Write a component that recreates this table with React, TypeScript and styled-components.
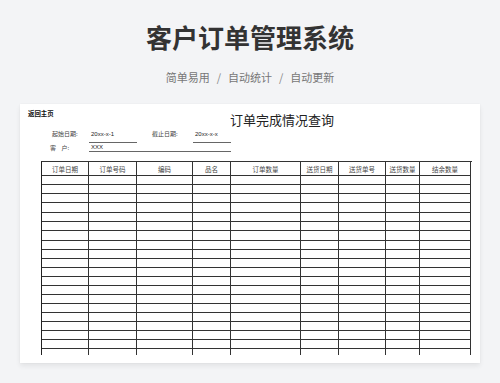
import React from "react";
import styled, { createGlobalStyle } from "styled-components";

const GlobalStyle = createGlobalStyle`
  html, body { margin: 0; padding: 0; }
  body {
    background: #f3f4f6;
    font-family: "Noto Sans CJK SC", "Noto Sans", sans-serif;
    width: 500px;
    height: 383px;
    overflow: hidden;
  }
`;

const Page = styled.div`
  display: flex;
  flex-direction: column;
  align-items: center;
  padding-top: 20px;
`;

const Title = styled.h1`
  margin: 0;
  font-size: 26px;
  line-height: 34px;
  font-weight: 700;
  color: #333;
`;

const Subtitle = styled.div`
  margin-top: 15px;
  height: 16px;
  font-size: 11px;
  line-height: 16px;
  color: #777;
  display: flex;
  align-items: center;
`;

const Sep = styled.span`
  margin: 0 7px;
  color: #888;
`;

const Card = styled.div`
  margin-top: 19px;
  align-self: stretch;
  margin-left: 20px;
  margin-right: 20px;
  height: 259px;
  box-sizing: border-box;
  background: #fff;
  box-shadow: 0 3px 5px rgba(0, 0, 0, 0.07), 0 0 2px rgba(0, 0, 0, 0.04);
  padding: 6px 9px 0 8px;
  display: flex;
  flex-direction: column;
  overflow: hidden;
`;

const HeadRow = styled.div`
  display: flex;
  align-items: flex-start;
  height: 18px;
`;

const BackLink = styled.span`
  font-size: 6.4px;
  line-height: 8px;
  font-weight: 700;
  color: #111;
  width: 26px;
  white-space: nowrap;
`;

const SheetTitle = styled.div`
  margin-left: 176px;
  margin-top: 1px;
  font-size: 13px;
  line-height: 18px;
  color: #222;
`;

const FormRow = styled.div<{ $h: number; $pl: number }>`
  display: flex;
  align-items: flex-start;
  height: ${(p) => p.$h}px;
  padding-left: ${(p) => p.$pl}px;
`;

const Label = styled.span<{ $w: number; $ml?: number; $top: number }>`
  width: ${(p) => p.$w}px;
  margin-left: ${(p) => p.$ml ?? 0}px;
  margin-top: ${(p) => p.$top}px;
  font-size: 6px;
  line-height: 8px;
  color: #444;
  white-space: pre;
`;

const Value = styled.span<{ $w: number; $h: number; $top: number }>`
  width: ${(p) => p.$w}px;
  height: ${(p) => p.$h}px;
  box-sizing: border-box;
  border-bottom: 1px solid #666;
  padding-left: 2px;
  padding-top: ${(p) => p.$top}px;
  font-family: "Liberation Sans", Arial, sans-serif;
  font-size: 6px;
  line-height: 8px;
  color: #222;
  white-space: nowrap;
`;

const Table = styled.div`
  margin-top: 9px;
  margin-left: 13px;
  width: 430px;
  border-top: 1px solid #333;
  border-left: 1px solid #222;
`;

const cols = "48px 48px 56px 38px 70px 38px 47px 34px 51px";

const Row = styled.div<{ $h: number }>`
  display: grid;
  grid-template-columns: ${cols};
  margin-left: -1px;
  height: ${(p) => p.$h}px;
`;

const Cell = styled.div<{ $last?: boolean; $first?: boolean }>`
  box-sizing: border-box;
  border-right: 1px solid #333;
  border-bottom: ${(p) => (p.$last ? "none" : "1px solid #333")};
  margin-left: ${(p) => (p.$first ? "1px" : "0")};
  display: flex;
  align-items: center;
  justify-content: center;
  font-size: 6.5px;
  color: #444;
  white-space: nowrap;
`;

const headers = ["订单日期", "订单号码", "编码", "品名", "订单数量", "送货日期", "送货单号", "送货数量", "结余数量"];
const rowHeights = [9, 9, 9, 10, 9, 9, 10, 9, 9, 9, 9, 9, 9, 9, 9, 9, 9, 9, 9];

export default function App() {
  return (
    <>
      <GlobalStyle />
      <Page>
        <Title>客户订单管理系统</Title>
        <Subtitle>
          <span>简单易用</span>
          <Sep>/</Sep>
          <span>自动统计</span>
          <Sep>/</Sep>
          <span>自动更新</span>
        </Subtitle>
        <Card>
          <HeadRow>
            <BackLink>返回主页</BackLink>
            <SheetTitle>订单完成情况查询</SheetTitle>
          </HeadRow>
          <FormRow $h={15} $pl={24}>
            <Label $w={37} $top={2}>起始日期:</Label>
            <Value $w={48} $h={15} $top={2}>20xx-x-1</Value>
            <Label $w={41} $ml={15} $top={2}>截止日期:</Label>
            <Value $w={38} $h={15} $top={2}>20xx-x-x</Value>
          </FormRow>
          <FormRow $h={9} $pl={22}>
            <Label $w={39} $top={1}>{"客    户:"}</Label>
            <Value $w={142} $h={9} $top={0}>XXX</Value>
          </FormRow>
          <Table>
            <Row $h={14}>
              {headers.map((h, i) => (
                <Cell key={h} $first={i === 0}>{h}</Cell>
              ))}
            </Row>
            {rowHeights.map((h, r) => (
              <Row key={r} $h={h}>
                {headers.map((c, i) => (
                  <Cell key={c} $first={i === 0} />
                ))}
              </Row>
            ))}
            <Row $h={6}>
              {headers.map((c, i) => (
                <Cell key={c} $first={i === 0} $last />
              ))}
            </Row>
          </Table>
        </Card>
      </Page>
    </>
  );
}
